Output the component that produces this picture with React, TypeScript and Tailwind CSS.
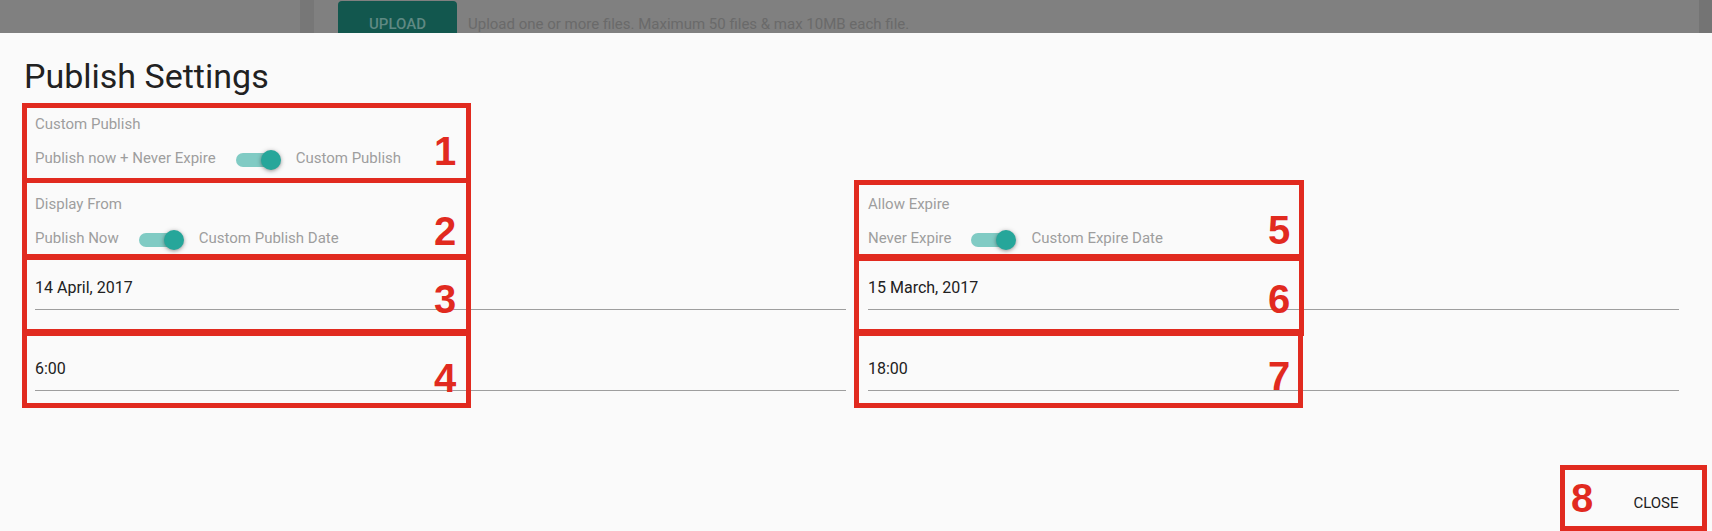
import React from 'react';

const RED = 'border-[#e12a1f]';

function Toggle() {
  return (
    <div className="relative mx-[20px] mr-[15px] mt-[4px] h-5 w-[45px] shrink-0">
      <div className="absolute left-0 top-[3px] h-[14px] w-[36px] rounded-full bg-[#80cbc4]" />
      <div className="absolute right-0 top-0 h-5 w-5 rounded-full bg-[#26a69a] shadow-[0_1px_5px_rgba(0,0,0,0.3),0_1px_3px_rgba(0,0,0,0.15)]" />
    </div>
  );
}

function SwitchField({ label, off, on }: { label: string; off: string; on: string }) {
  return (
    <div>
      <div className="h-5 text-[15px] leading-5 text-[#9e9e9e]">{label}</div>
      <div className="mt-3 flex h-6 items-center text-[15px] leading-5 text-[#9e9e9e]">
        <span>{off}</span>
        <Toggle />
        <span>{on}</span>
      </div>
    </div>
  );
}

function TextField({ value }: { value: string }) {
  return (
    <div>
      <div className="h-6 text-base leading-6 text-[#212121]">{value}</div>
      <div className="mt-[9px] h-px bg-[#9e9e9e]" />
    </div>
  );
}

// annotation boxes drawn over the dialog
const boxes = [
  { n: '1', box: 'left-[22px] top-[103px] w-[449px] h-[80px]', num: 'left-[434px] top-[131px]' },
  { n: '2', box: 'left-[22px] top-[178px] w-[449px] h-[82px]', num: 'left-[434px] top-[211px]' },
  { n: '3', box: 'left-[22px] top-[254px] w-[449px] h-[82px]', num: 'left-[434px] top-[279px]' },
  { n: '4', box: 'left-[22px] top-[329px] w-[449px] h-[79px]', num: 'left-[434px] top-[358px]' },
  { n: '5', box: 'left-[854px] top-[180px] w-[450px] h-[81px]', num: 'left-[1268px] top-[210px]' },
  { n: '6', box: 'left-[854px] top-[254px] w-[450px] h-[82px]', num: 'left-[1268px] top-[279px]' },
  { n: '7', box: 'left-[854px] top-[329px] w-[449px] h-[79px]', num: 'left-[1268px] top-[356px]' },
  { n: '8', box: 'left-[1560px] top-[465px] w-[147px] h-[66px]', num: 'left-[1571px] top-[478px]' },
];

export default function App() {
  return (
    <div className="relative flex h-[531px] w-[1712px] flex-col overflow-hidden bg-[#fafafa] font-['Roboto',sans-serif]">
      {/* page behind the dialog, dimmed */}
      <div className="flex h-[33px] shrink-0 items-start overflow-hidden bg-[#808080]">
        <div className="w-[300px] shrink-0" />
        <div className="h-full w-[14px] shrink-0 bg-[#777777]" />
        <div className="ml-[24px] mt-[1px] flex h-[40px] w-[119px] shrink-0 justify-center rounded bg-[#12574e] pt-[13px] text-[15px] font-medium leading-5 text-[#5f8983]">
          UPLOAD
        </div>
        <div className="ml-[11px] pt-[14px] text-[15px] leading-5 text-[#6a6a6a]">
          Upload one or more files. Maximum 50 files &amp; max 10MB each file.
        </div>
        <div className="flex-1" />
        <div className="h-full w-[13px] shrink-0 bg-[#747474]" />
      </div>

      <h1 className="mt-[23px] h-10 pl-[24px] text-[34px] font-normal leading-10 text-[#212121]">Publish Settings</h1>

      <div className="pl-[35px] pr-[33px]">
        <div className="pt-[18px]">
          <SwitchField label="Custom Publish" off="Publish now + Never Expire" on="Custom Publish" />
        </div>
        <div className="mt-[24px] grid grid-cols-2 gap-x-[22px]">
          <SwitchField label="Display From" off="Publish Now" on="Custom Publish Date" />
          <SwitchField label="Allow Expire" off="Never Expire" on="Custom Expire Date" />
          <div className="mt-[26px]">
            <TextField value="14 April, 2017" />
          </div>
          <div className="mt-[26px]">
            <TextField value="15 March, 2017" />
          </div>
          <div className="mt-[47px]">
            <TextField value="6:00" />
          </div>
          <div className="mt-[47px]">
            <TextField value="18:00" />
          </div>
        </div>
      </div>

      <div className="flex-1" />
      <div className="flex justify-end pb-[10px] pr-[12px]">
        <button className="h-9 min-w-[88px] px-4 text-[15px] font-normal uppercase leading-9 text-[#212121]">Close</button>
      </div>

      <div className="pointer-events-none absolute inset-0">
        {boxes.map((b) => (
          <React.Fragment key={b.n}>
            <div className={`absolute border-[5px] ${RED} ${b.box}`} />
            <div className={`absolute h-10 font-['Liberation_Sans',sans-serif] text-[40px] font-bold leading-10 text-[#e12a1f] ${b.num}`}>
              {b.n}
            </div>
          </React.Fragment>
        ))}
      </div>
    </div>
  );
}
